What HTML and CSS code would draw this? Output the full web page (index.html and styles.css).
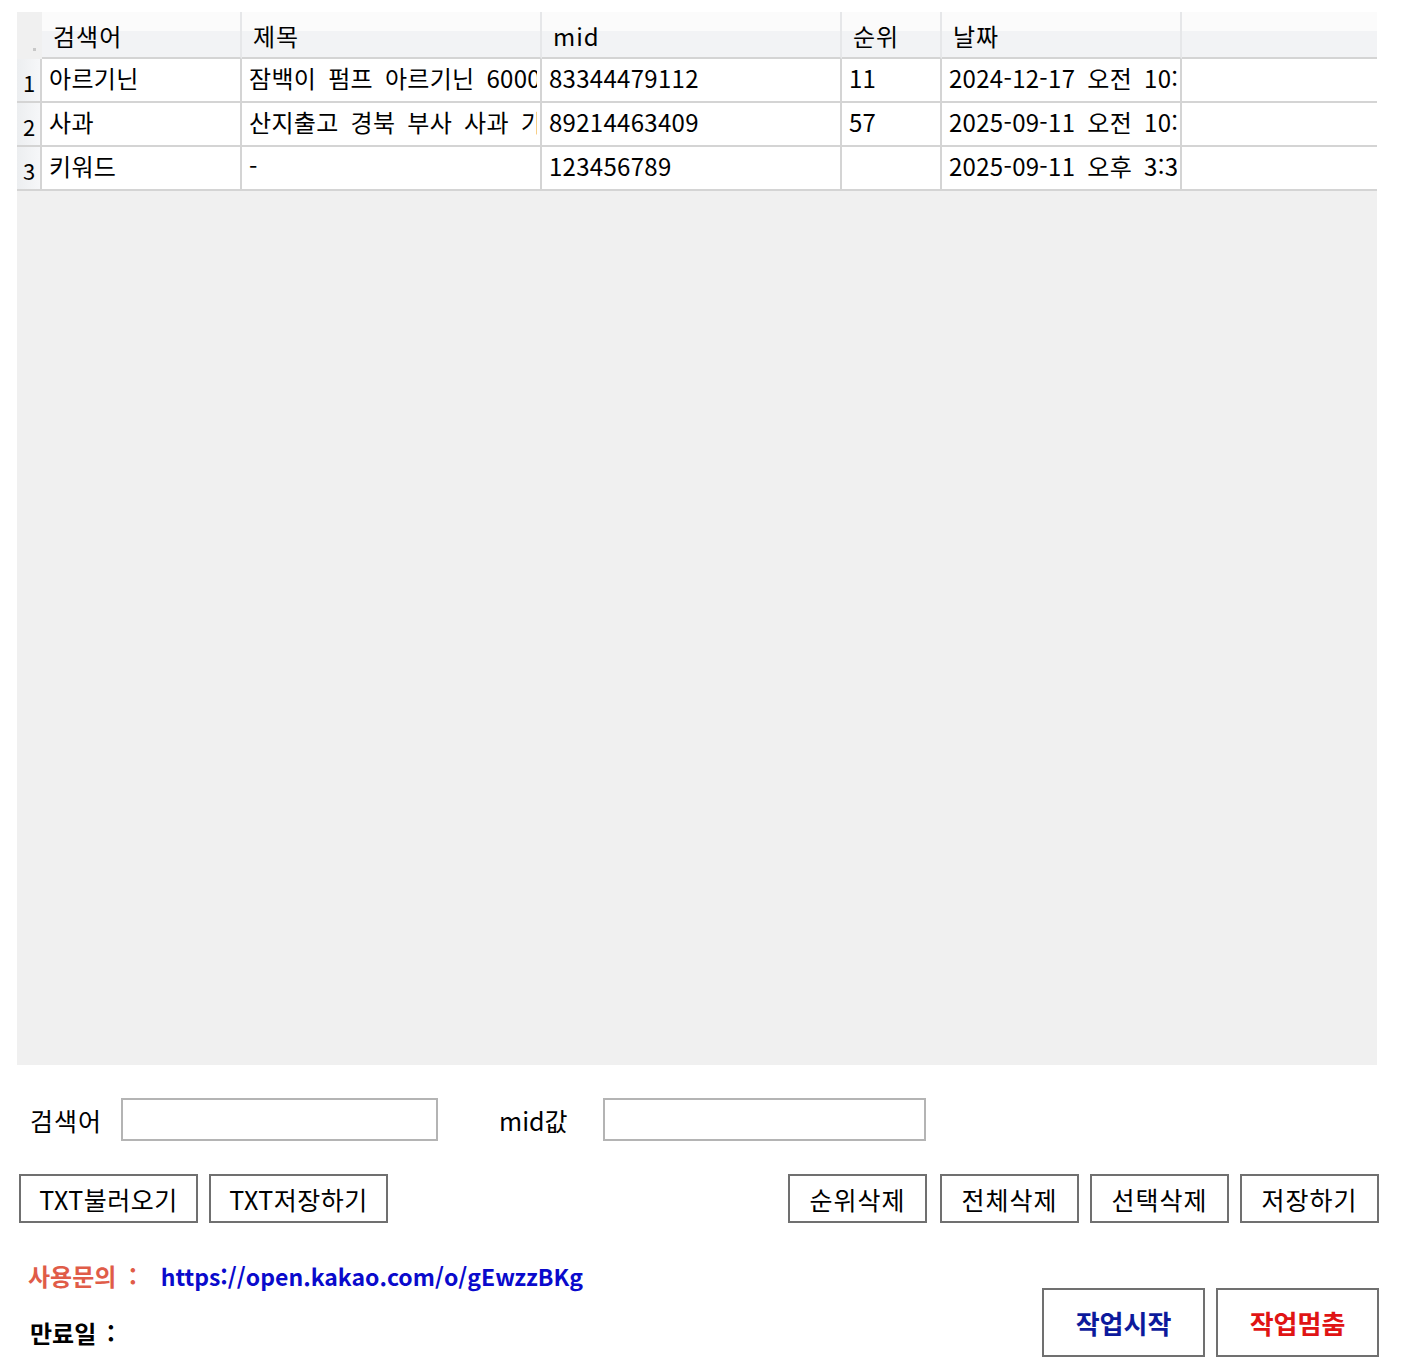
FILE: index.html
```html
<!DOCTYPE html>
<html lang="ko">
<head>
    <meta charset="UTF-8">
    <title>순위 체크</title>
    <link rel="stylesheet" href="styles.css">
</head>
<body>

<div class="app">
    <!-- 데이터 그리드 -->
    <div class="sheet">
        <div class="row head">
            <div class="corner"><span class="corner-mark"></span></div>
            <div class="hcell">검색어</div>
            <div class="hcell">제목</div>
            <div class="hcell">mid</div>
            <div class="hcell">순위</div>
            <div class="hcell">날짜</div>
            <div class="hcell last"></div>
        </div>
        <div class="row">
            <div class="rnum">1</div>
            <div class="cell"><span>아르기닌</span></div>
            <div class="cell"><span>잠백이 펌프 아르기닌 6000mg</span></div>
            <div class="cell"><span>83344479112</span></div>
            <div class="cell"><span>11</span></div>
            <div class="cell"><span>2024-12-17 오전 10:30:12</span></div>
            <div class="cell last"></div>
        </div>
        <div class="row">
            <div class="rnum">2</div>
            <div class="cell"><span>사과</span></div>
            <div class="cell"><span>산지출고 경북 부사 사과 가정용</span></div>
            <div class="cell"><span>89214463409</span></div>
            <div class="cell"><span>57</span></div>
            <div class="cell"><span>2025-09-11 오전 10:32:45</span></div>
            <div class="cell last"></div>
        </div>
        <div class="row">
            <div class="rnum">3</div>
            <div class="cell"><span>키워드</span></div>
            <div class="cell"><span>-</span></div>
            <div class="cell"><span>123456789</span></div>
            <div class="cell"></div>
            <div class="cell"><span>2025-09-11 오후 3:30:05</span></div>
            <div class="cell last"></div>
        </div>
    </div>

    <!-- 입력 -->
    <div class="inputs">
        <label class="label first">검색어</label>
        <input class="field keyword" type="text">
        <label class="label second">mid값</label>
        <input class="field mid" type="text">
    </div>

    <!-- 버튼 -->
    <div class="toolbar">
        <div class="group left">
            <button class="btn wide">TXT불러오기</button>
            <button class="btn wide">TXT저장하기</button>
        </div>
        <div class="group right">
            <button class="btn">순위삭제</button>
            <button class="btn">전체삭제</button>
            <button class="btn">선택삭제</button>
            <button class="btn">저장하기</button>
        </div>
    </div>

    <div class="footer">
        <div class="info">
            <div class="contact">
                <span class="contact-label">사용문의 :</span>
                <a class="contact-link" href="#">https://open.kakao.com/o/gEwzzBKg</a>
            </div>
            <div class="expire">만료일 :</div>
        </div>
        <div class="actions">
            <button class="btn big start">작업시작</button>
            <button class="btn big stop">작업멈춤</button>
        </div>
    </div>
</div>

</body>
</html>
```

FILE: styles.css
```css
body {
    margin: 0;
    background-color: #ffffff;
    font-family: "Noto Sans CJK KR", "Noto Sans", sans-serif;
    color: #000;
}

.app {
    width: 1362px;
    padding: 12px 0 0 17px;
}

/* 그리드 */
.sheet {
    width: 1360px;
    height: 1053px;
    background-color: #f0f0f0;
    overflow: hidden;
}

.row {
    display: grid;
    grid-template-columns: 25px 200px 300px 300px 100px 240px 195px;
    height: 44px;
    background-color: #ffffff;
}

.row.head {
    height: 47px;
    background-color: transparent;
}

.cell, .hcell, .rnum, .corner {
    box-sizing: border-box;
    overflow: hidden;
    white-space: nowrap;
    font-size: 24px;
    line-height: 30px;
}

.cell {
    display: flex;
    align-items: center;
    padding: 0 0 5px 7px;
    word-spacing: 5px;
    letter-spacing: 0.3px;
    border-right: 2px solid #d4d4d4;
    border-bottom: 2px solid #d4d4d4;
}

.cell span {
    flex: 1;
    min-width: 0;
    overflow: hidden;
    margin-right: 3px;
}

.cell.last, .hcell.last {
    border-right: none;
}

.hcell {
    display: flex;
    align-items: center;
    padding: 2px 0 0 11px;
    letter-spacing: 1px;
    background: linear-gradient(#fbfbfb 0, #fbfbfb 19px, #f2f3f5 19px, #f2f3f5 100%);
    border-right: 2px solid #e6e7e9;
    border-bottom: 2px solid #d4d4d4;
}

.corner {
    position: relative;
    background-color: #f0f0f0;
    border-bottom: 2px solid #f0f0f0;
}

.corner-mark {
    position: absolute;
    right: 6px;
    bottom: 6px;
    width: 3px;
    height: 3px;
    background-color: #c8c8c8;
}

.rnum {
    display: flex;
    align-items: center;
    justify-content: center;
    padding: 4px 0 0 1px;
    font-size: 22px;
    background: linear-gradient(to right, #eceef0, #f6f7f9);
    border-right: 2px solid #d4d4d4;
    border-bottom: 2px solid #d4d4d4;
}

/* 입력 */
.inputs {
    display: flex;
    align-items: center;
    margin-top: 33px;
    height: 43px;
}

.label {
    font-size: 25px;
    line-height: 30px;
    letter-spacing: 1px;
}

.label.first {
    margin-left: 13px;
    width: 91px;
}

.label.second {
    margin-left: 61px;
    width: 104px;
    letter-spacing: 0;
}

.field {
    box-sizing: border-box;
    height: 43px;
    border: 2px solid #b4b4b4;
    background-color: #ffffff;
    margin: 0;
    outline: none;
}

.field.keyword {
    width: 317px;
}

.field.mid {
    width: 323px;
}

/* 버튼 */
.toolbar {
    display: flex;
    justify-content: space-between;
    margin-top: 33px;
    width: 1362px;
}

.group {
    display: flex;
    gap: 11px;
}

.group.left {
    margin-left: 2px;
}

.group.right .btn:first-child {
    margin-right: 2px;
}

.btn {
    box-sizing: border-box;
    width: 139px;
    height: 49px;
    padding: 0;
    border: 2px solid #707070;
    background-color: #ffffff;
    font-family: "Noto Sans CJK KR", "Noto Sans", sans-serif;
    font-size: 25px;
    letter-spacing: 1px;
    color: #000;
}

.btn.wide {
    width: 179px;
    letter-spacing: 0.5px;
}

.footer {
    display: flex;
    justify-content: space-between;
    margin-top: 38px;
    width: 1362px;
}

.info {
    font-size: 24px;
    line-height: 30px;
    font-weight: bold;
}

.contact {
    margin-left: 11px;
}

.contact-label {
    display: inline-block;
    width: 126px;
    color: #e05c48;
    word-spacing: 6px;
}

.contact-link {
    font-size: 23px;
    color: #0a0acc;
    text-decoration: none;
    word-spacing: 0;
}

.expire {
    margin: 27px 0 0 13px;
    word-spacing: 4px;
}

.actions {
    display: flex;
    gap: 11px;
    margin-top: 27px;
}

.btn.big {
    width: 163px;
    height: 69px;
    font-size: 26px;
    font-weight: bold;
    letter-spacing: 0;
}

.btn.start {
    color: #0c1a9c;
}

.btn.stop {
    color: #e01414;
}
```
